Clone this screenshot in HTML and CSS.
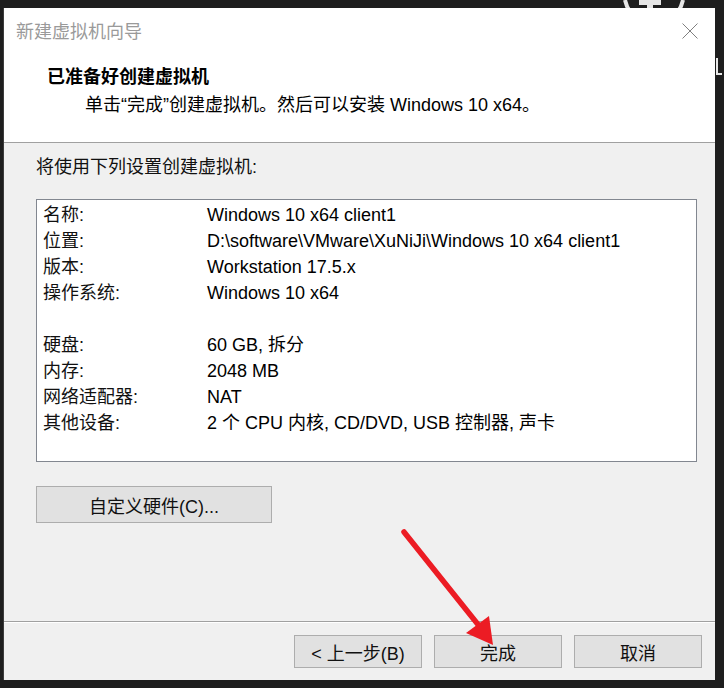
FILE: index.html
```html
<!DOCTYPE html>
<html lang="zh-CN">
<head>
<meta charset="utf-8">
<title>新建虚拟机向导</title>
<link rel="stylesheet" href="styles.css">
</head>
<body>
<svg class="bg-deco" width="724" height="90" viewBox="0 0 724 90">
  <path d="M625 0 Q628 14 640 20" fill="none" stroke="#e6e6e6" stroke-width="4"/>
  <path d="M683 0 Q680 14 668 20" fill="none" stroke="#e6e6e6" stroke-width="4"/>
  <rect x="639" y="0" width="22" height="5" fill="#e6e6e6"/>
  <rect x="647" y="4" width="6" height="6" fill="#e6e6e6"/>
  <path d="M717 58 V74 H722" fill="none" stroke="#e8e8e8" stroke-width="2"/>
</svg>
<div class="window">
  <div class="header">
    <div class="titlebar">
      <span class="title">新建虚拟机向导</span>
      <svg class="close" width="16" height="16" viewBox="0 0 16 16"><path d="M0.5 0.5 L15.5 15.5 M15.5 0.5 L0.5 15.5" stroke="#808080" stroke-width="1" fill="none"/></svg>
    </div>
    <div class="heading">已准备好创建虚拟机</div>
    <div class="subtitle">单击“完成”创建虚拟机。然后可以安装 Windows 10 x64。</div>
  </div>
  <div class="content">
    <div class="intro">将使用下列设置创建虚拟机:</div>
    <div class="summary">
      <div class="row"><span class="key">名称:</span><span class="val">Windows 10 x64 client1</span></div>
      <div class="row"><span class="key">位置:</span><span class="val">D:\software\VMware\XuNiJi\Windows 10 x64 client1</span></div>
      <div class="row"><span class="key">版本:</span><span class="val">Workstation 17.5.x</span></div>
      <div class="row"><span class="key">操作系统:</span><span class="val">Windows 10 x64</span></div>
      <div class="row"></div>
      <div class="row"><span class="key">硬盘:</span><span class="val">60 GB, 拆分</span></div>
      <div class="row"><span class="key">内存:</span><span class="val">2048 MB</span></div>
      <div class="row"><span class="key">网络适配器:</span><span class="val">NAT</span></div>
      <div class="row"><span class="key">其他设备:</span><span class="val">2 个 CPU 内核, CD/DVD, USB 控制器, 声卡</span></div>
    </div>
    <button class="btn custom">自定义硬件(C)...</button>
  </div>
  <div class="footer">
    <button class="btn nav">&lt; 上一步(B)</button>
    <button class="btn nav">完成</button>
    <button class="btn nav">取消</button>
  </div>
</div>
<svg class="arrow" width="724" height="688" viewBox="0 0 724 688">
  <line x1="404" y1="532" x2="480" y2="627" stroke="#ec1c24" stroke-width="5.5" stroke-linecap="round"/>
  <polygon points="493,645 466,633 489,616" fill="#ec1c24"/>
</svg>
</body>
</html>
```

FILE: styles.css
```css
html, body {
  margin: 0;
  padding: 0;
}
body {
  background: #1e1e1e;
  width: 724px;
  height: 688px;
  overflow: hidden;
  position: relative;
  font-family: "Liberation Sans", "Noto Sans CJK SC", sans-serif;
  font-size: 18px;
  color: #111;
  padding: 8px 0 0 4px;
  box-sizing: border-box;
}
.bg-deco {
  position: absolute;
  left: 0;
  top: 0;
}
.window {
  position: relative;
  width: 711px;
  height: 672px;
  background: #f0f0f0;
  display: flex;
  flex-direction: column;
  box-shadow: -1px 0 0 #3c3c3c;
}
.header {
  background: #fff;
  height: 134px;
  border-bottom: 1px solid #a0a0a0;
  flex: none;
}
.titlebar {
  height: 48px;
  display: flex;
  justify-content: space-between;
  align-items: flex-start;
  padding: 0 17px 0 12px;
}
.title {
  line-height: 48px;
  color: #9a9a9a;
}
.close {
  margin-top: 15px;
}
.heading {
  margin-top: 8px;
  padding-left: 43px;
  line-height: 26px;
  font-weight: bold;
  color: #000;
}
.subtitle {
  margin-top: 2px;
  padding-left: 81px;
  line-height: 26px;
  color: #000;
}
.content {
  flex: 1;
  padding: 11px 18px 0 32px;
}
.intro {
  line-height: 26px;
}
.summary {
  margin-top: 19px;
  height: 263px;
  box-sizing: border-box;
  border: 1px solid #828790;
  background: #fff;
  padding: 2px 6px 0 6px;
}
.row {
  display: flex;
  height: 26px;
  line-height: 26px;
  white-space: nowrap;
}
.key {
  width: 164px;
  flex: none;
}
.val {
  color: #000;
}
.btn {
  font-family: "Liberation Sans", "Noto Sans CJK SC", sans-serif;
  font-size: 18px;
  color: #111;
  background: #e1e1e1;
  border: 1px solid #adadad;
  padding: 0;
  margin: 0;
  box-sizing: border-box;
}
.custom {
  margin-top: 24px;
  width: 236px;
  height: 37px;
}
.footer {
  flex: none;
  height: 59px;
  box-sizing: border-box;
  border-top: 1px solid #a0a0a0;
  box-shadow: inset 0 1px 0 #fff;
  display: flex;
  justify-content: flex-end;
  align-items: flex-start;
  gap: 12px;
  padding: 13px 13px 0 0;
}
.nav {
  width: 128px;
  height: 33px;
}
.arrow {
  position: absolute;
  left: 0;
  top: 0;
  pointer-events: none;
}
```
